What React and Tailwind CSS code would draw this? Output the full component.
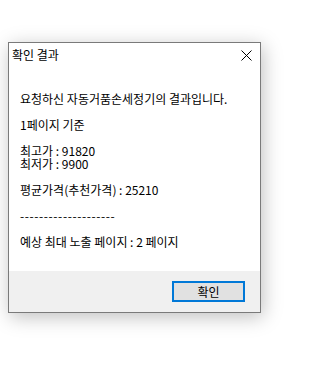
export default function App() {
  const font = { fontFamily: '"Noto Sans CJK KR", "Noto Sans", sans-serif' };
  return (
    <div className="w-[321px] h-[373px] bg-white pt-[42px] pl-[8px]" style={font}>
      <div className="w-[253px] h-[271px] border border-[#7a7a7a] bg-white flex flex-col shadow-[2px_4px_18px_rgba(0,0,0,0.25)]">
        <div className="h-[24px] flex items-center justify-between pl-[3px] pr-[8px] text-[12px] text-black">
          <span>확인 결과</span>
          <svg width="11" height="11" viewBox="0 0 11 11">
            <path d="M0.5 0.5 L10.5 10.5 M10.5 0.5 L0.5 10.5" stroke="#000" strokeWidth="1" fill="none" />
          </svg>
        </div>
        <div className="flex-1 pt-[25px] pl-[11px] text-[12px] leading-[13px] text-black whitespace-pre">
          {"요청하신 자동거품손세정기의 결과입니다.\n\n1페이지 기준\n\n최고가 : 91820\n최저가 : 9900\n\n평균가격(추천가격) : 25210\n\n"}
          <span className="tracking-[0.6px]">{"--------------------"}</span>
          {"\n\n예상 최대 노출 페이지 : 2 페이지"}
        </div>
        <div className="h-[41px] bg-[#f0f0f0] flex justify-end pt-[10px] pr-[15px]">
          <div className="w-[73px] h-[21px] border-2 border-[#0078d7] bg-[#e1e1e1] flex items-center justify-center text-[12px] text-black">
            확인
          </div>
        </div>
      </div>
    </div>
  );
}
